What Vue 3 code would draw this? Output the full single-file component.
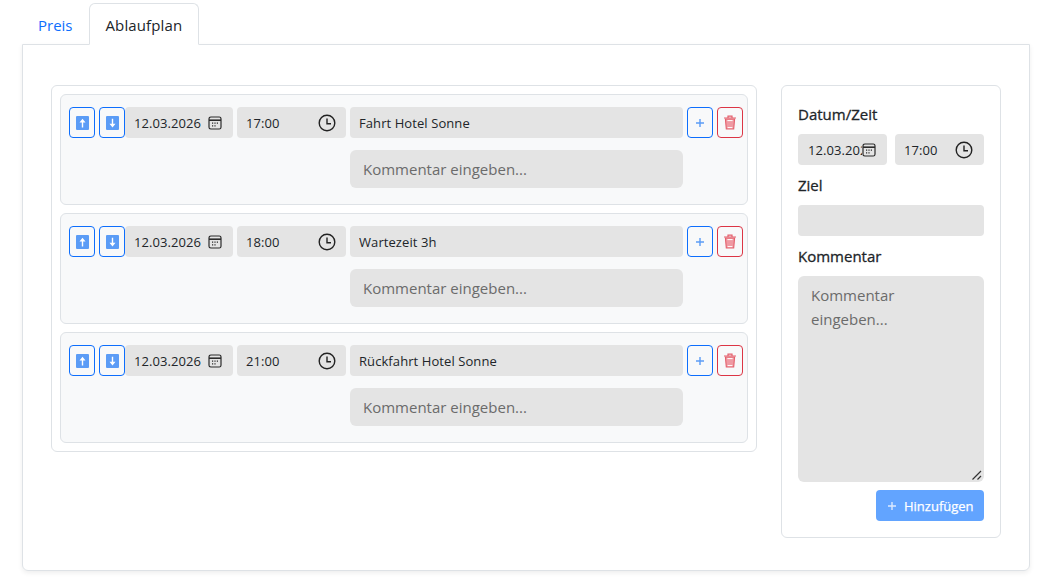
<script setup>
const rows = [
  { date: '12.03.2026', time: '17:00', text: 'Fahrt Hotel Sonne' },
  { date: '12.03.2026', time: '18:00', text: 'Wartezeit 3h' },
  { date: '12.03.2026', time: '21:00', text: 'Rückfahrt Hotel Sonne' },
]
</script>

<template>
  <div class="page">
    <nav class="tabs">
      <a class="tab">Preis</a>
      <a class="tab active">Ablaufplan</a>
    </nav>
    <section class="card">
      <div class="list">
        <div v-for="r in rows" :key="r.time" class="item">
          <div class="row">
            <div class="pair">
              <button class="btn blue" aria-label="hoch">
                <svg width="13" height="14" viewBox="0 0 13 14"><rect width="13" height="14" rx="1" class="sq" /><path d="M6.5 2.8 9.5 6.4H7.2V11.4H5.8V6.4H3.5Z" fill="#fff" /></svg>
              </button>
              <button class="btn blue" aria-label="runter">
                <svg width="13" height="14" viewBox="0 0 13 14"><rect width="13" height="14" rx="1" class="sq" /><path d="M6.5 11.4 3.5 7.8H5.8V2.8H7.2V7.8H9.5Z" fill="#fff" /></svg>
              </button>
            </div>
            <div class="field date">
              <span>{{ r.date }}</span>
              <svg width="14" height="14" viewBox="0 0 14 14" fill="none" stroke="#2b2b2b"><rect x="1" y="1" width="12" height="12" rx="1.8" stroke-width="1.2" /><path d="M1 4.2H13" stroke-width="1.6" /><path d="M4 7.2h1.2M6.4 7.2h1.2M8.8 7.2H10M4 9.8h1.2M6.4 9.8h1.2" stroke-width="1.3" /></svg>
            </div>
            <div class="field time">
              <span>{{ r.time }}</span>
              <svg width="18" height="18" viewBox="0 0 18 18" fill="none" stroke="#222" stroke-width="1.4"><circle cx="9" cy="9" r="7.8" /><path d="M9 4.4V9.8H13" /></svg>
            </div>
            <input class="field text" :value="r.text" />
            <button class="btn blue" aria-label="plus">
              <svg width="8" height="8" viewBox="0 0 8 8"><path d="M4 0V8M0 4H8" stroke="#5b9cf6" stroke-width="1.4" /></svg>
            </button>
            <button class="btn red" aria-label="löschen">
              <svg width="14" height="15" viewBox="0 0 14 15" fill="none"><path d="M2.4 4 3.3 14H10.7L11.6 4Z" fill="#ef9aa3" stroke="#e4606d" stroke-width="1.1" /><path d="M1 3H13M5 3V1.2H9V3" stroke="#e4606d" stroke-width="1.2" /><path d="M4.6 12.6H9.4M4.4 5.6H9.6" stroke="#fff" stroke-width="1" /></svg>
            </button>
          </div>
          <div class="comment-row">
            <input class="comment" placeholder="Kommentar eingeben..." />
          </div>
        </div>
      </div>

      <aside class="side">
        <label class="lbl first">Datum/Zeit</label>
        <div class="side-dt">
          <div class="field sdate">
            <span class="clip">12.03.2026</span>
            <svg width="14" height="14" viewBox="0 0 14 14" fill="none" stroke="#2b2b2b"><rect x="1" y="1" width="12" height="12" rx="1.8" stroke-width="1.2" /><path d="M1 4.2H13" stroke-width="1.6" /><path d="M4 7.2h1.2M6.4 7.2h1.2M8.8 7.2H10M4 9.8h1.2M6.4 9.8h1.2" stroke-width="1.3" /></svg>
          </div>
          <div class="field stime">
            <span>17:00</span>
            <svg width="18" height="18" viewBox="0 0 18 18" fill="none" stroke="#222" stroke-width="1.4"><circle cx="9" cy="9" r="7.8" /><path d="M9 4.4V9.8H13" /></svg>
          </div>
        </div>
        <label class="lbl">Ziel</label>
        <input class="field full" />
        <label class="lbl">Kommentar</label>
        <div class="ta-wrap">
          <textarea class="ta" placeholder="Kommentar eingeben..."></textarea>
          <svg class="grip" width="10" height="10" viewBox="0 0 10 10" fill="none" stroke="#333" stroke-width="1.2"><path d="M0.5 9.5 9 1M5.5 9.5 9 6" /></svg>
        </div>
        <div class="add-row">
          <button class="add">
            <svg width="8" height="8" viewBox="0 0 8 8"><path d="M4 0V8M0 4H8" stroke="#dbe9ff" stroke-width="1.4" /></svg>
            Hinzufügen
          </button>
        </div>
      </aside>
    </section>
  </div>
</template>

<style>
html, body { margin: 0; background: #fff; }
</style>

<style scoped>
.page {
  width: 1047px;
  height: 587px;
  box-sizing: border-box;
  padding: 3px 17px 0 22px;
  font-family: "Open Sans", "Noto Sans", sans-serif;
  color: #212529;
  overflow: hidden;
}
.tabs { display: flex; height: 41px; }
.tab {
  box-sizing: border-box;
  padding: 0 15px;
  height: 42px;
  line-height: 42px;
  font-size: 15px;
  color: #0d6efd;
  border: 1px solid transparent;
  border-radius: 6px 6px 0 0;
  position: relative;
  z-index: 1;
}
.tab.active {
  width: 110px;
  padding: 0 16px;
  white-space: nowrap;
  letter-spacing: 0.12px;
  color: #212529;
  background: #fff;
  border-color: #dee2e6 #dee2e6 #fff;
}
.card {
  box-sizing: border-box;
  height: 527px;
  border: 1px solid #dee2e6;
  border-radius: 0 0 6px 6px;
  box-shadow: 0 2px 5px rgba(0, 0, 0, 0.07);
  padding: 40px 28px 0;
  display: flex;
  align-items: flex-start;
  gap: 24px;
}
.list {
  box-sizing: border-box;
  width: 706px;
  border: 1px solid #dee2e6;
  border-radius: 6px;
  padding: 8px;
  display: flex;
  flex-direction: column;
  gap: 8px;
}
.item {
  box-sizing: border-box;
  height: 111px;
  background: #f8f9fa;
  border: 1px solid #dee2e6;
  border-radius: 6px;
  padding: 12px 4px 0 8px;
}
.row { display: flex; gap: 4px; height: 31px; }
.pair { display: flex; gap: 4px; margin-right: -4px; }
.btn {
  box-sizing: border-box;
  width: 26px;
  height: 31px;
  padding: 0;
  display: flex;
  align-items: center;
  justify-content: center;
  background: transparent;
  border-radius: 4px;
  border: 1px solid;
}
.btn.blue { border-color: #0d6efd; }
.btn.red { border-color: #dc3545; }
.sq { fill: #5b9cf6; }
.field {
  box-sizing: border-box;
  height: 31px;
  flex: none;
  background: #e4e4e4;
  border: 0;
  border-radius: 4px;
  font: inherit;
  font-size: 13px;
  letter-spacing: 0.08px;
  color: #212529;
  display: flex;
  align-items: center;
  outline: none;
}
.date { width: 108px; padding: 0 11px 0 9px; justify-content: space-between; }
.time { width: 109px; padding: 0 10px 0 9px; justify-content: space-between; }
.text { width: 333px; padding: 0 9px; }
.comment-row { display: flex; margin-top: 12px; padding-left: 281px; }
.comment {
  box-sizing: border-box;
  width: 333px;
  height: 38px;
  background: #e4e4e4;
  border: 0;
  border-radius: 6px;
  padding: 0 13px;
  font: inherit;
  font-size: 15px;
  outline: none;
}
.comment::placeholder, .ta::placeholder { color: #6b6b6b; opacity: 1; }
.side {
  box-sizing: border-box;
  width: 220px;
  height: 453px;
  border: 1px solid #dee2e6;
  border-radius: 6px;
  padding: 16px;
  display: flex;
  flex-direction: column;
}
.lbl {
  font-size: 15px;
  font-weight: 400;
  -webkit-text-stroke: 0.3px currentColor;
  line-height: 20px;
  margin: 10px 0;
  flex: none;
}
.lbl.first { margin-top: 2px; }
.side-dt { display: flex; gap: 8px; flex: none; }
.sdate { width: 89px; padding: 0 11px 0 10px; }
.clip { display: block; width: 54px; overflow: hidden; white-space: nowrap; flex: none; }
.sdate svg { flex: none; }
.stime { width: 89px; padding: 0 11px 0 9px; justify-content: space-between; }
.full { width: 186px; }
.ta-wrap { display: flex; position: relative; flex: none; }
.ta {
  box-sizing: border-box;
  width: 186px;
  height: 206px;
  background: #e4e4e4;
  border: 0;
  border-radius: 6px;
  padding: 7px 13px;
  font: inherit;
  font-size: 15px;
  line-height: 24px;
  outline: none;
  display: block;
  resize: none;
}
.grip { position: absolute; right: 2px; bottom: 2px; }
.add-row { display: flex; justify-content: flex-end; margin-top: 8px; flex: none; }
.add {
  box-sizing: border-box;
  width: 108px;
  height: 31px;
  background: #62a4ff;
  color: #fff;
  border: 0;
  border-radius: 4px;
  font: inherit;
  font-size: 13px;
  -webkit-text-stroke: 0.25px #fff;
  display: flex;
  align-items: center;
  padding: 0 0 0 12px;
  gap: 8px;
}
</style>
